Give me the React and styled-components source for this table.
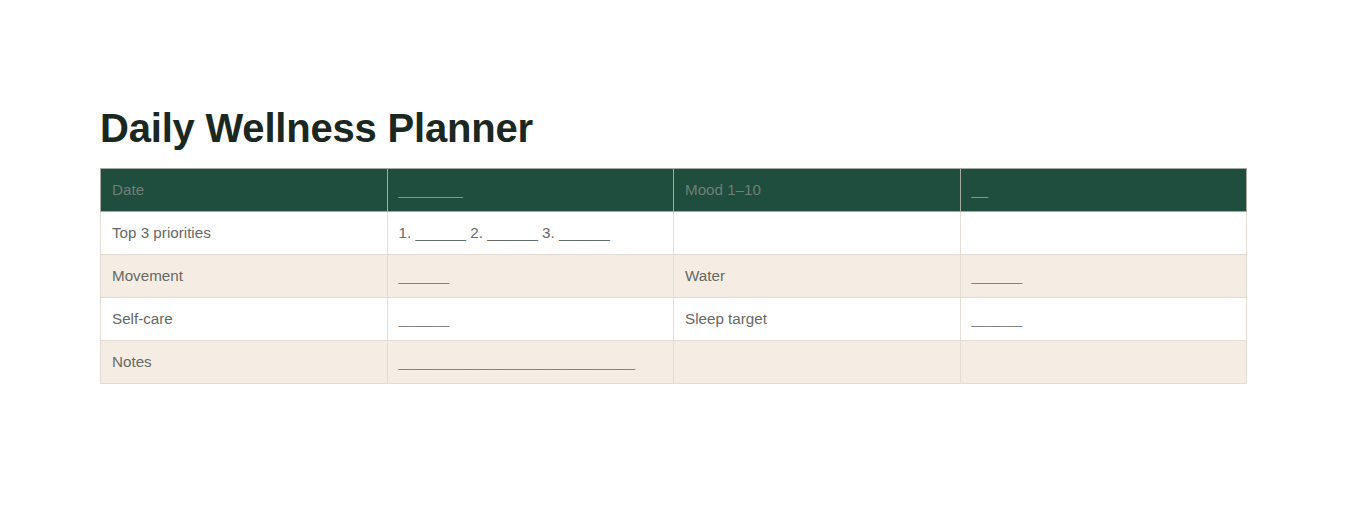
import styled, { createGlobalStyle } from 'styled-components'

const Global = createGlobalStyle`
  html, body { margin:0; padding:0; background:#fff; }
  body { font-family:"Liberation Sans", Arial, Helvetica, sans-serif; }
`

/* ── Styled ── */
const Page     = styled.main`padding:104px 100px 0;`
const Title    = styled.h1`margin:0 0 16px;font-size:40px;line-height:48px;font-weight:700;letter-spacing:-0.2px;color:#1b2822;`
const Table    = styled.table`width:100%;border-collapse:collapse;table-layout:fixed;font-size:15.2px;line-height:18px;`
const HeadCell = styled.th`
  background:#1f4e3e;color:#6f7f75;font-weight:400;text-align:left;
  padding:12px 11px;border:1px solid #a7aaa2;
`
const HeadBlank = styled.span`color:#8b958f;letter-spacing:-0.5px;`
const Row      = styled.tr`background:${({ $alt }) => $alt ? '#f5ede3' : '#fff'};`
const Cell     = styled.td`padding:12px 11px;border:1px solid #e3ddd3;color:#646a64;`
const Blank    = styled.span`color:#80857f;`

const header = ['Date', '________', 'Mood 1–10', '__']

const rows = [
  ['Top 3 priorities', '1. ______ 2. ______ 3. ______', '', ''],
  ['Movement', '______', 'Water', '______'],
  ['Self-care', '______', 'Sleep target', '______'],
  ['Notes', '____________________________', '', ''],
]

const App = () => (
  <>
    <Global />
    <Page>
      <Title>Daily Wellness Planner</Title>
      <Table>
        <thead>
          <tr>
            {header.map((h, i) => (
              <HeadCell key={i}>{h.startsWith('_') ? <HeadBlank>{h}</HeadBlank> : h}</HeadCell>
            ))}
          </tr>
        </thead>
        <tbody>
          {rows.map((r, i) => (
            <Row key={i} $alt={i % 2 === 1}>
              {r.map((c, j) => (
                <Cell key={j}>{c.startsWith('_') ? <Blank>{c}</Blank> : c}</Cell>
              ))}
            </Row>
          ))}
        </tbody>
      </Table>
    </Page>
  </>
)

export default App
